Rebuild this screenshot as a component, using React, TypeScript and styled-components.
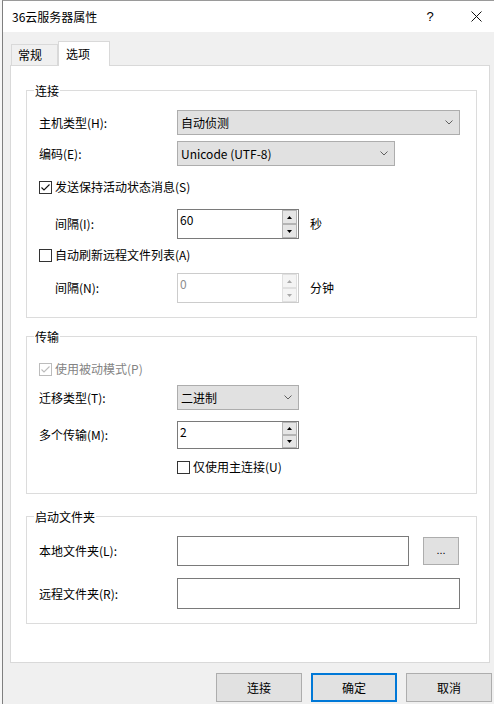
import React from "react";
import styled, { createGlobalStyle } from "styled-components";

const Global = createGlobalStyle`
  html, body { margin: 0; padding: 0; background: #fff; }
  body {
    font-family: "Noto Sans CJK SC", "Microsoft YaHei", sans-serif;
    font-size: 12px;
    color: #000;
  }
  * { box-sizing: border-box; }
`;

const Screen = styled.div`
  width: 494px;
  height: 704px;
  display: flex;
  overflow: hidden;
  background: #fff;
`;

const Backdrop = styled.div`
  width: 2px;
  flex: none;
  background: #f7f7f7;
`;

const Window = styled.div`
  flex: none;
  width: 497px;
  display: flex;
  flex-direction: column;
  border-left: 1px solid #7f7f7f;
  border-top: 1px solid #9a9a9a;
`;

const TitleBar = styled.div`
  height: 31px;
  flex: none;
  display: flex;
  align-items: center;
  padding-left: 9px;
  background: #fff;
`;

const Title = styled.span`
  flex: 1;
  line-height: 16px;
`;

const CaptionButton = styled.div`
  width: 46px;
  height: 31px;
  display: flex;
  align-items: center;
  justify-content: center;
  font-family: "Liberation Sans", sans-serif;
  font-size: 13px;
`;

const Body = styled.div`
  flex: 1;
  background: #f0f0f0;
  display: flex;
  flex-direction: column;
  padding: 9px 0 0 7px;
`;

const TabStrip = styled.div`
  display: flex;
  align-items: flex-end;
  height: 25px;
  padding-left: 1px;
  margin-bottom: -1px;
  position: relative;
  z-index: 1;
`;

const Tab = styled.div<{ $active?: boolean }>`
  height: ${(p) => (p.$active ? 25 : 21)}px;
  width: ${(p) => (p.$active ? 52 : 47)}px;
  margin-bottom: ${(p) => (p.$active ? 0 : 1)}px;
  margin-left: ${(p) => (p.$active ? -0 : 0)}px;
  padding-left: ${(p) => (p.$active ? 7 : 6)}px;
  display: flex;
  align-items: center;
  background: ${(p) => (p.$active ? "#fff" : "#f0f0f0")};
  border: 1px solid #d9d9d9;
  border-bottom: none;
  line-height: 16px;
`;

const Panel = styled.div`
  width: 480px;
  height: 598px;
  background: #fff;
  border: 1px solid #d9d9d9;
  display: flex;
  flex-direction: column;
`;

const Group = styled.fieldset<{ $mt: number; $pb: number }>`
  margin: ${(p) => p.$mt}px 12px 0 15px;
  padding: 0 0 ${(p) => p.$pb}px 0;
  border: 1px solid #dcdcdc;
  min-width: 0;
`;

const Legend = styled.legend`
  margin-left: 7px;
  padding: 0 1px;
  height: 15px;
  line-height: 15px;
  font-size: 12px;
`;

const Row = styled.div<{ $mt: number; $h: number }>`
  display: flex;
  align-items: center;
  margin-top: ${(p) => p.$mt}px;
  height: ${(p) => p.$h}px;
  padding-left: 12px;
`;

const Label = styled.span<{ $indent?: boolean }>`
  width: 138px;
  flex: none;
  padding-left: ${(p) => (p.$indent ? 16 : 0)}px;
  line-height: 16px;
  white-space: nowrap;
`;

const Select = styled.div<{ $w: number }>`
  width: ${(p) => p.$w}px;
  height: 100%;
  flex: none;
  background: #e1e1e1;
  border: 1px solid #adadad;
  display: flex;
  align-items: center;
  justify-content: space-between;
  padding: 0 6px 0 3px;
  line-height: 16px;
`;

const Spin = styled.div<{ $disabled?: boolean }>`
  width: 122px;
  height: 100%;
  flex: none;
  display: flex;
  background: #fff;
  border: 1px solid ${(p) => (p.$disabled ? "#cccccc" : "#7a7a7a")};
`;

const SpinValue = styled.span<{ $disabled?: boolean }>`
  flex: 1;
  padding: 2px 0 0 2px;
  line-height: 16px;
  color: ${(p) => (p.$disabled ? "#8d8d8d" : "#000")};
`;

const SpinButtons = styled.div`
  width: 15px;
  margin-right: 1px;
  display: flex;
  flex-direction: column;
`;

const SpinButton = styled.div<{ $disabled?: boolean }>`
  flex: 1;
  display: flex;
  align-items: center;
  justify-content: center;
  background: ${(p) => (p.$disabled ? "#f4f4f4" : "#e5e5e5")};
  border: 1px solid ${(p) => (p.$disabled ? "#e0e0e0" : "#b4b4b4")};
  & + & { margin-top: 0; }
`;

const Unit = styled.span`
  margin-left: 11px;
  line-height: 16px;
`;

const CheckLine = styled.label<{ $disabled?: boolean }>`
  display: flex;
  align-items: center;
  gap: 3px;
  line-height: 16px;
  color: ${(p) => (p.$disabled ? "#838383" : "#000")};
`;

const Box = styled.span<{ $disabled?: boolean }>`
  width: 13px;
  height: 13px;
  flex: none;
  display: inline-flex;
  align-items: center;
  justify-content: center;
  background: #fff;
  border: 1px solid ${(p) => (p.$disabled ? "#bcbcbc" : "#333333")};
`;

const TextBox = styled.div<{ $w: number }>`
  width: ${(p) => p.$w}px;
  height: 100%;
  flex: none;
  background: #fff;
  border: 1px solid #7a7a7a;
`;

const BrowseButton = styled.div`
  width: 36px;
  height: 28px;
  margin-left: 14px;
  flex: none;
  display: flex;
  align-items: center;
  justify-content: center;
  background: #e1e1e1;
  border: 1px solid #adadad;
  font-family: "Liberation Sans", sans-serif;
  font-size: 11px;
  padding-bottom: 3px;
`;

const Spacer = styled.span`
  width: 138px;
  flex: none;
`;

const ButtonRow = styled.div`
  display: flex;
  justify-content: flex-end;
  gap: 9px;
  margin-top: 10px;
  padding-right: 7px;
`;

const DialogButton = styled.div<{ $default?: boolean }>`
  width: 86px;
  height: 29px;
  display: flex;
  align-items: center;
  justify-content: center;
  background: #e1e1e1;
  border: ${(p) => (p.$default ? "2px solid #0078d7" : "1px solid #adadad")};
  line-height: 16px;
`;

const Chevron = () => (
  <svg width="8" height="5" viewBox="0 0 8 5">
    <path d="M0.5 0.5 L4 4 L7.5 0.5" fill="none" stroke="#606060" strokeWidth="1" />
  </svg>
);

const Arrow = ({ up, disabled }: { up?: boolean; disabled?: boolean }) => (
  <svg width="5" height="3" viewBox="0 0 5 3">
    <path d={up ? "M0 3 L5 3 L2.5 0 Z" : "M0 0 L5 0 L2.5 3 Z"} fill={disabled ? "#a8a8a8" : "#000"} />
  </svg>
);

const Tick = ({ disabled }: { disabled?: boolean }) => (
  <svg width="11" height="11" viewBox="0 0 11 11">
    <path d="M1.5 5.5 L4 8 L9.5 2.5" fill="none" stroke={disabled ? "#bcbcbc" : "#111"} strokeWidth="1.1" />
  </svg>
);

const Checkbox = ({ checked, disabled, children }: { checked?: boolean; disabled?: boolean; children: React.ReactNode }) => (
  <CheckLine $disabled={disabled}>
    <Box $disabled={disabled}>{checked && <Tick disabled={disabled} />}</Box>
    {children}
  </CheckLine>
);

const Spinner = ({ value, disabled }: { value: string; disabled?: boolean }) => (
  <Spin $disabled={disabled}>
    <SpinValue $disabled={disabled}>{value}</SpinValue>
    <SpinButtons>
      <SpinButton $disabled={disabled}><Arrow up disabled={disabled} /></SpinButton>
      <SpinButton $disabled={disabled}><Arrow disabled={disabled} /></SpinButton>
    </SpinButtons>
  </Spin>
);

export default function App() {
  return (
    <Screen>
      <Global />
      <Backdrop />
      <Window>
        <TitleBar>
          <Title>36云服务器属性</Title>
          <CaptionButton>?</CaptionButton>
          <CaptionButton>
            <svg width="11" height="11" viewBox="0 0 11 11">
              <path d="M0.5 0.5 L10.5 10.5 M10.5 0.5 L0.5 10.5" stroke="#111" strokeWidth="1" />
            </svg>
          </CaptionButton>
        </TitleBar>
        <Body>
          <TabStrip>
            <Tab>常规</Tab>
            <Tab $active>选项</Tab>
          </TabStrip>
          <Panel>
            <Group $mt={17} $pb={14}>
              <Legend>连接</Legend>
              <Row $mt={12} $h={25}>
                <Label>主机类型(H):</Label>
                <Select $w={283}>自动侦测<Chevron /></Select>
              </Row>
              <Row $mt={6} $h={25}>
                <Label>编码(E):</Label>
                <Select $w={218}>Unicode (UTF-8)<Chevron /></Select>
              </Row>
              <Row $mt={14} $h={14}>
                <Checkbox checked>发送保持活动状态消息(S)</Checkbox>
              </Row>
              <Row $mt={15} $h={30}>
                <Label $indent>间隔(I):</Label>
                <Spinner value="60" />
                <Unit>秒</Unit>
              </Row>
              <Row $mt={9} $h={14}>
                <Checkbox>自动刷新远程文件列表(A)</Checkbox>
              </Row>
              <Row $mt={11} $h={30}>
                <Label $indent>间隔(N):</Label>
                <Spinner value="0" disabled />
                <Unit>分钟</Unit>
              </Row>
            </Group>

            <Group $mt={11} $pb={19}>
              <Legend>传输</Legend>
              <Row $mt={18} $h={14}>
                <Checkbox checked disabled>使用被动模式(P)</Checkbox>
              </Row>
              <Row $mt={9} $h={25}>
                <Label>迁移类型(T):</Label>
                <Select $w={122}>二进制<Chevron /></Select>
              </Row>
              <Row $mt={11} $h={28}>
                <Label>多个传输(M):</Label>
                <Spinner value="2" />
              </Row>
              <Row $mt={11} $h={14}>
                <Spacer />
                <Checkbox>仅使用主连接(U)</Checkbox>
              </Row>
            </Group>

            <Group $mt={15} $pb={14}>
              <Legend>启动文件夹</Legend>
              <Row $mt={12} $h={30}>
                <Label>本地文件夹(L):</Label>
                <TextBox $w={232} />
                <BrowseButton>...</BrowseButton>
              </Row>
              <Row $mt={12} $h={31}>
                <Label>远程文件夹(R):</Label>
                <TextBox $w={283} />
              </Row>
            </Group>
          </Panel>
          <ButtonRow>
            <DialogButton>连接</DialogButton>
            <DialogButton $default>确定</DialogButton>
            <DialogButton>取消</DialogButton>
          </ButtonRow>
        </Body>
      </Window>
    </Screen>
  );
}
